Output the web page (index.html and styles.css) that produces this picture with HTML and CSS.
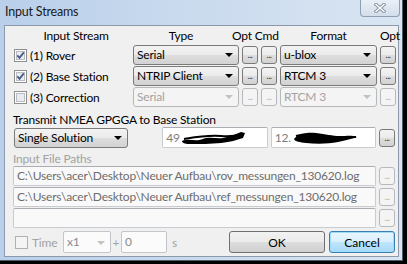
FILE: index.html
```html
<!DOCTYPE html>
<html lang="en">
<head>
    <meta charset="UTF-8">
    <meta name="viewport" content="width=device-width, initial-scale=1.0">
    <title>Input Streams</title>
    <link rel="stylesheet" href="styles.css">
</head>
<body>
    <div class="window">
        <div class="titlebar">
            <span class="title">Input Streams</span>
            <div class="close-btn">
                <svg width="12" height="10" viewBox="0 0 12 10">
                    <path d="M2 1.5 L10 8.5 M10 1.5 L2 8.5" stroke="#8a95a4" stroke-width="3.4" stroke-linecap="square"/>
                    <path d="M2 1.5 L10 8.5 M10 1.5 L2 8.5" stroke="#ffffff" stroke-width="1.4" stroke-linecap="square"/>
                </svg>
            </div>
        </div>

        <div class="client">
            <div class="streams">
                <div class="hdr hdr-stream">Input Stream</div>
                <div class="hdr hdr-type">Type</div>
                <div class="hdr hdr-optcmd">Opt Cmd</div>
                <div class="hdr">Format</div>
                <div class="hdr">Opt</div>

                <!-- (1) Rover -->
                <label class="stream-name">
                    <svg class="check" width="13" height="13" viewBox="0 0 13 13">
                        <rect x="0.5" y="0.5" width="12" height="12" fill="#ffffff" stroke="#8e8f8f"/>
                        <rect x="2.5" y="2.5" width="8" height="8" fill="#e9ebee" stroke="#b9bdc3"/>
                        <path d="M3.3 6.4 L5.5 8.8 L9.8 3.4" fill="none" stroke="#4a5a86" stroke-width="1.8"/>
                    </svg>
                    (1) Rover
                </label>
                <div class="combo">Serial<span class="arrow"></span></div>
                <div class="dots">...</div>
                <div class="dots">...</div>
                <div class="combo">u-blox<span class="arrow"></span></div>
                <div class="dots">...</div>

                <!-- (2) Base Station -->
                <label class="stream-name">
                    <svg class="check" width="13" height="13" viewBox="0 0 13 13">
                        <rect x="0.5" y="0.5" width="12" height="12" fill="#ffffff" stroke="#8e8f8f"/>
                        <rect x="2.5" y="2.5" width="8" height="8" fill="#e9ebee" stroke="#b9bdc3"/>
                        <path d="M3.3 6.4 L5.5 8.8 L9.8 3.4" fill="none" stroke="#4a5a86" stroke-width="1.8"/>
                    </svg>
                    (2) Base Station
                </label>
                <div class="combo">NTRIP Client<span class="arrow"></span></div>
                <div class="dots">...</div>
                <div class="dots">...</div>
                <div class="combo">RTCM 3<span class="arrow"></span></div>
                <div class="dots">...</div>

                <!-- (3) Correction -->
                <label class="stream-name">
                    <svg class="check" width="13" height="13" viewBox="0 0 13 13">
                        <rect x="0.5" y="0.5" width="12" height="12" fill="#ffffff" stroke="#8e8f8f"/>
                        <rect x="2.5" y="2.5" width="8" height="8" fill="#e9ebee" stroke="#b9bdc3"/>
                    </svg>
                    (3) Correction
                </label>
                <div class="combo disabled">Serial<span class="arrow"></span></div>
                <div class="dots disabled">...</div>
                <div class="dots disabled">...</div>
                <div class="combo disabled">RTCM 3<span class="arrow"></span></div>
                <div class="dots disabled">...</div>
            </div>

            <div class="label label-transmit">Transmit NMEA GPGGA to Base Station</div>
            <div class="transmit-row">
                <div class="combo combo-nmea">Single Solution<span class="arrow"></span></div>
                <div class="field field-pos field-lat">
                    <span class="pos-text">49</span>
                    <svg class="scribble" width="66" height="14" viewBox="0 0 66 14">
                        <path d="M1 10 C8 7 14 11 22 8 C30 5 38 9 46 6 C52 4 56 3 60 1 L64 2 L62 7 C55 9 50 11 40 12 C30 13 18 13 8 13 C4 13 1 12 1 10 Z" fill="#000"/>
                        <path d="M3 8 C15 6 25 4 40 5 C48 6 55 5 63 3" fill="none" stroke="#000" stroke-width="2"/>
                    </svg>
                </div>
                <div class="field field-pos field-lon">
                    <span class="pos-text">12.</span>
                    <svg class="scribble" width="66" height="14" viewBox="0 0 66 14">
                        <path d="M2 8 C6 3 14 1 24 2 C34 3 40 5 48 5 C55 5 60 4 65 6 C60 8 54 9 46 11 C36 13 24 13 14 12 C8 11 3 11 2 8 Z" fill="#000"/>
                        <path d="M4 5 C14 2 24 3 34 6 C44 8 54 6 64 6" fill="none" stroke="#000" stroke-width="2"/>
                    </svg>
                </div>
                <div class="dots">...</div>
            </div>

            <div class="label label-paths">Input File Paths</div>
            <div class="path-row">
                <div class="field field-path">C:\Users\acer\Desktop\Neuer Aufbau\rov_messungen_130620.log</div>
                <div class="dots">...</div>
            </div>
            <div class="path-row">
                <div class="field field-path">C:\Users\acer\Desktop\Neuer Aufbau\ref_messungen_130620.log</div>
                <div class="dots">...</div>
            </div>
            <div class="path-row">
                <div class="field field-path"></div>
                <div class="dots">...</div>
            </div>

            <div class="bottom-row">
                <label class="time-opt">
                    <svg class="check" width="13" height="13" viewBox="0 0 13 13">
                        <rect x="0.5" y="0.5" width="12" height="12" fill="#f4f4f4" stroke="#b1b1b1"/>
                    </svg>
                    Time
                </label>
                <div class="combo combo-speed">x1<span class="arrow"></span></div>
                <span class="plus">+</span>
                <div class="field field-offset">0</div>
                <span class="unit">s</span>
                <button class="btn btn-ok">OK</button>
                <button class="btn btn-cancel">Cancel</button>
            </div>
        </div>
    </div>
</body>
</html>
```

FILE: styles.css
```css
body {
    margin: 0;
    background-color: #000;
    font-family: Lato, "Noto Sans", sans-serif;
    font-size: 12px;
    letter-spacing: -0.2px;
    color: #000;
}
.window {
    width: 403px;
    height: 261px;
    box-sizing: border-box;
    display: flex;
    flex-direction: column;
    padding: 0 3px 3px 4px;
    background: linear-gradient(to right, #b9cfea, #c9daee 45%, #d9e5f2);
    border-right: 1px solid #505b68;
    border-bottom: 1px solid #505b68;
}
.titlebar {
    height: 25px;
    display: flex;
    justify-content: space-between;
    align-items: flex-start;
}
.title {
    padding: 4px 0 0 1px;
    line-height: 16px;
    font-size: 12.5px;
    color: #1a1a1a;
}
.close-btn {
    width: 40px;
    height: 17px;
    box-sizing: border-box;
    margin-right: -1px;
    border: 1px solid #8e9fb3;
    border-top: none;
    border-radius: 0 0 4px 4px;
    background: linear-gradient(#e9eff6, #d3deeb);
    display: flex;
    align-items: center;
    justify-content: center;
}
.client {
    flex: 1;
    background-color: #f0f0f0;
    border: 1px solid #8b99aa;
    padding: 2px 3px 0 8px;
}

/* stream table */
.streams {
    display: grid;
    grid-template-columns: 117px 106px 16px 16px 97px 16px;
    grid-template-rows: 16px repeat(3, 20px);
    column-gap: 3px;
    row-gap: 1px;
}
.hdr {
    text-align: center;
    line-height: 16px;
    white-space: nowrap;
}
.hdr-stream {
    padding-left: 9px;
}
.hdr-type {
    padding-right: 10px;
}
.hdr-optcmd {
    grid-column: span 2;
    margin-left: -10px;
}
.stream-name {
    display: flex;
    align-items: center;
    gap: 3px;
    padding-left: 1px;
    white-space: nowrap;
}
.check {
    flex: none;
}

/* controls */
.combo {
    position: relative;
    height: 20px;
    box-sizing: border-box;
    padding-left: 3px;
    line-height: 18px;
    border: 1px solid #7a7a7a;
    border-radius: 3px;
    background: linear-gradient(#f3f3f3 0%, #ebebeb 48%, #dddddd 52%, #d2d2d2 100%);
    white-space: nowrap;
}
.combo .arrow {
    position: absolute;
    right: 5px;
    top: 7px;
    width: 0;
    height: 0;
    border-left: 4px solid transparent;
    border-right: 4px solid transparent;
    border-top: 4px solid #000;
}
.combo.disabled {
    border-color: #b5b9bc;
    background: #f4f4f4;
    color: #a3a3a3;
}
.combo.disabled .arrow {
    border-top-color: #c2c2c2;
}
.dots {
    align-self: center;
    width: 16px;
    height: 18px;
    box-sizing: border-box;
    border: 1px solid #7a7a7a;
    border-radius: 3px;
    background: linear-gradient(#f3f3f3 0%, #ebebeb 48%, #dddddd 52%, #d2d2d2 100%);
    font-size: 9px;
    line-height: 16px;
    text-align: center;
    color: #333;
    letter-spacing: -0.5px;
}
.dots.disabled {
    border-color: #b5b9bc;
    background: #f4f4f4;
    color: #b0b0b0;
}
.field {
    height: 20px;
    box-sizing: border-box;
    border: 1px solid #c8ccd1;
    border-top-color: #abadb3;
    border-radius: 2px;
    background-color: #fff;
    padding-left: 3px;
    line-height: 18px;
    white-space: nowrap;
    overflow: hidden;
}

.label {
    line-height: 15px;
}
.label-transmit {
    margin-top: 5px;
}
.label-paths {
    margin-top: 3px;
    color: #a3a3a3;
}

.transmit-row {
    display: flex;
    align-items: center;
    height: 21px;
}
.combo-nmea {
    width: 115px;
    margin-left: 1px;
}
.field-pos {
    width: 106px;
    height: 21px;
    display: flex;
    align-items: center;
    gap: 1px;
    color: #7d7d7d;
}
.field-lat {
    margin-left: 34px;
}
.field-lon {
    margin-left: 3px;
}
.transmit-row .dots {
    margin-left: 3px;
}
.scribble {
    flex: none;
}

.path-row {
    display: flex;
    align-items: center;
    height: 20px;
    margin-bottom: 1px;
}
.field-path {
    width: 364px;
    color: #6d6d6d;
    background-color: #f9f9f9;
}
.path-row .dots {
    margin-left: 3px;
    color: #b0b0b0;
    border-color: #b5b9bc;
    background: #f4f4f4;
}

.bottom-row {
    display: flex;
    align-items: center;
    height: 22px;
    margin-top: 3px;
    color: #a3a3a3;
}
.time-opt {
    width: 48px;
    display: flex;
    align-items: center;
    gap: 4px;
    padding-left: 2px;
}
.combo-speed {
    width: 48px;
    height: 22px;
    line-height: 20px;
    border-color: #c3c6ca;
    border-radius: 2px;
    background: #fbfbfb;
    color: #8a8a8a;
}
.combo-speed .arrow {
    top: 9px;
    border-top-color: #c2c2c2;
}
.plus {
    width: 10px;
    text-align: center;
}
.field-offset {
    width: 46px;
    height: 22px;
    line-height: 20px;
    color: #8a8a8a;
    background-color: #fbfbfb;
    border-color: #c3c6ca;
}
.unit {
    margin-left: 5px;
}
.btn {
    height: 22px;
    box-sizing: border-box;
    border: 1px solid #707070;
    border-radius: 3px;
    background: linear-gradient(#f2f2f2 0%, #ebebeb 48%, #dddddd 52%, #cfcfcf 100%);
    font-family: inherit;
    font-size: 12px;
    color: #000;
    padding: 0;
}
.btn-ok {
    width: 96px;
    margin-left: auto;
}
.btn-cancel {
    width: 66px;
    margin-left: 4px;
    border-color: #3c7fb1;
    background: linear-gradient(#eaf6fd 0%, #d9f0fc 48%, #bee6fd 52%, #a7d9f5 100%);
    box-shadow: inset 0 0 0 1px #9fdcfb;
}
```
